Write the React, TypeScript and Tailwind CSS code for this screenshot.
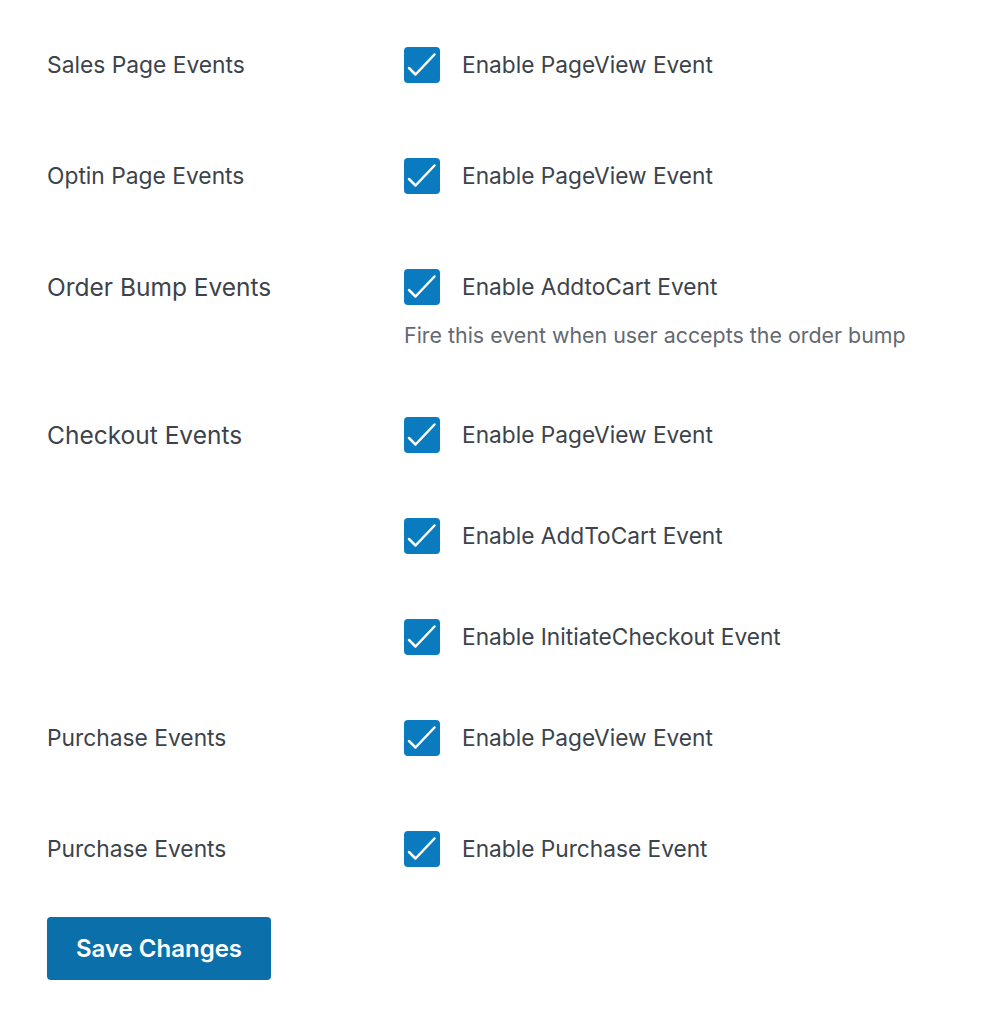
import React from "react";

const font = { fontFamily: "Inter, 'Noto Sans', sans-serif" };

function Check({ label }: { label: string }) {
  return (
    <div className="flex h-9 items-center">
      <span className="flex h-9 w-9 shrink-0 items-center justify-center rounded-[4px] bg-[#0b7bbf]">
        <svg width="36" height="36" viewBox="0 0 36 36" fill="none">
          <path d="M5 21 L11.5 27.5 L30.5 7.5" stroke="white" strokeWidth="2.5" strokeLinecap="round" strokeLinejoin="round" />
        </svg>
      </span>
      <span className="ml-[22px] text-[22.7px] leading-9 text-[#3c434a]">{label}</span>
    </div>
  );
}

function Row({ label, children, className = "", big = false }: { label: string; children: React.ReactNode; className?: string; big?: boolean }) {
  return (
    <div className={"flex " + className}>
      <div className={"w-[357px] shrink-0 leading-9 text-[#3c434a] " + (big ? "text-[24.5px]" : "text-[22.8px]")}>{label}</div>
      <div className="flex flex-col">{children}</div>
    </div>
  );
}

export default function App() {
  return (
    <div className="min-h-[1024px] bg-white pl-[47px] pt-[47px]" style={font}>
      <Row label="Sales Page Events">
        <Check label="Enable PageView Event" />
      </Row>
      <Row label="Optin Page Events" className="mt-[75px]">
        <Check label="Enable PageView Event" />
      </Row>
      <Row label="Order Bump Events" className="mt-[75px]" big>
        <Check label="Enable AddtoCart Event" />
        <p className="mt-[18px] text-[21.4px] leading-6 text-[#646970]">Fire this event when user accepts the order bump</p>
      </Row>
      <Row label="Checkout Events" className="mt-[70px]" big>
        <div className="flex flex-col gap-[65px]">
          <Check label="Enable PageView Event" />
          <Check label="Enable AddToCart Event" />
          <Check label="Enable InitiateCheckout Event" />
        </div>
      </Row>
      <Row label="Purchase Events" className="mt-[65px]">
        <Check label="Enable PageView Event" />
      </Row>
      <Row label="Purchase Events" className="mt-[75px]">
        <Check label="Enable Purchase Event" />
      </Row>
      <button className="mt-[50px] h-[63px] w-[224px] rounded-[4px] bg-[#0b6fa9] text-[24px] font-semibold text-white">
        Save Changes
      </button>
    </div>
  );
}
